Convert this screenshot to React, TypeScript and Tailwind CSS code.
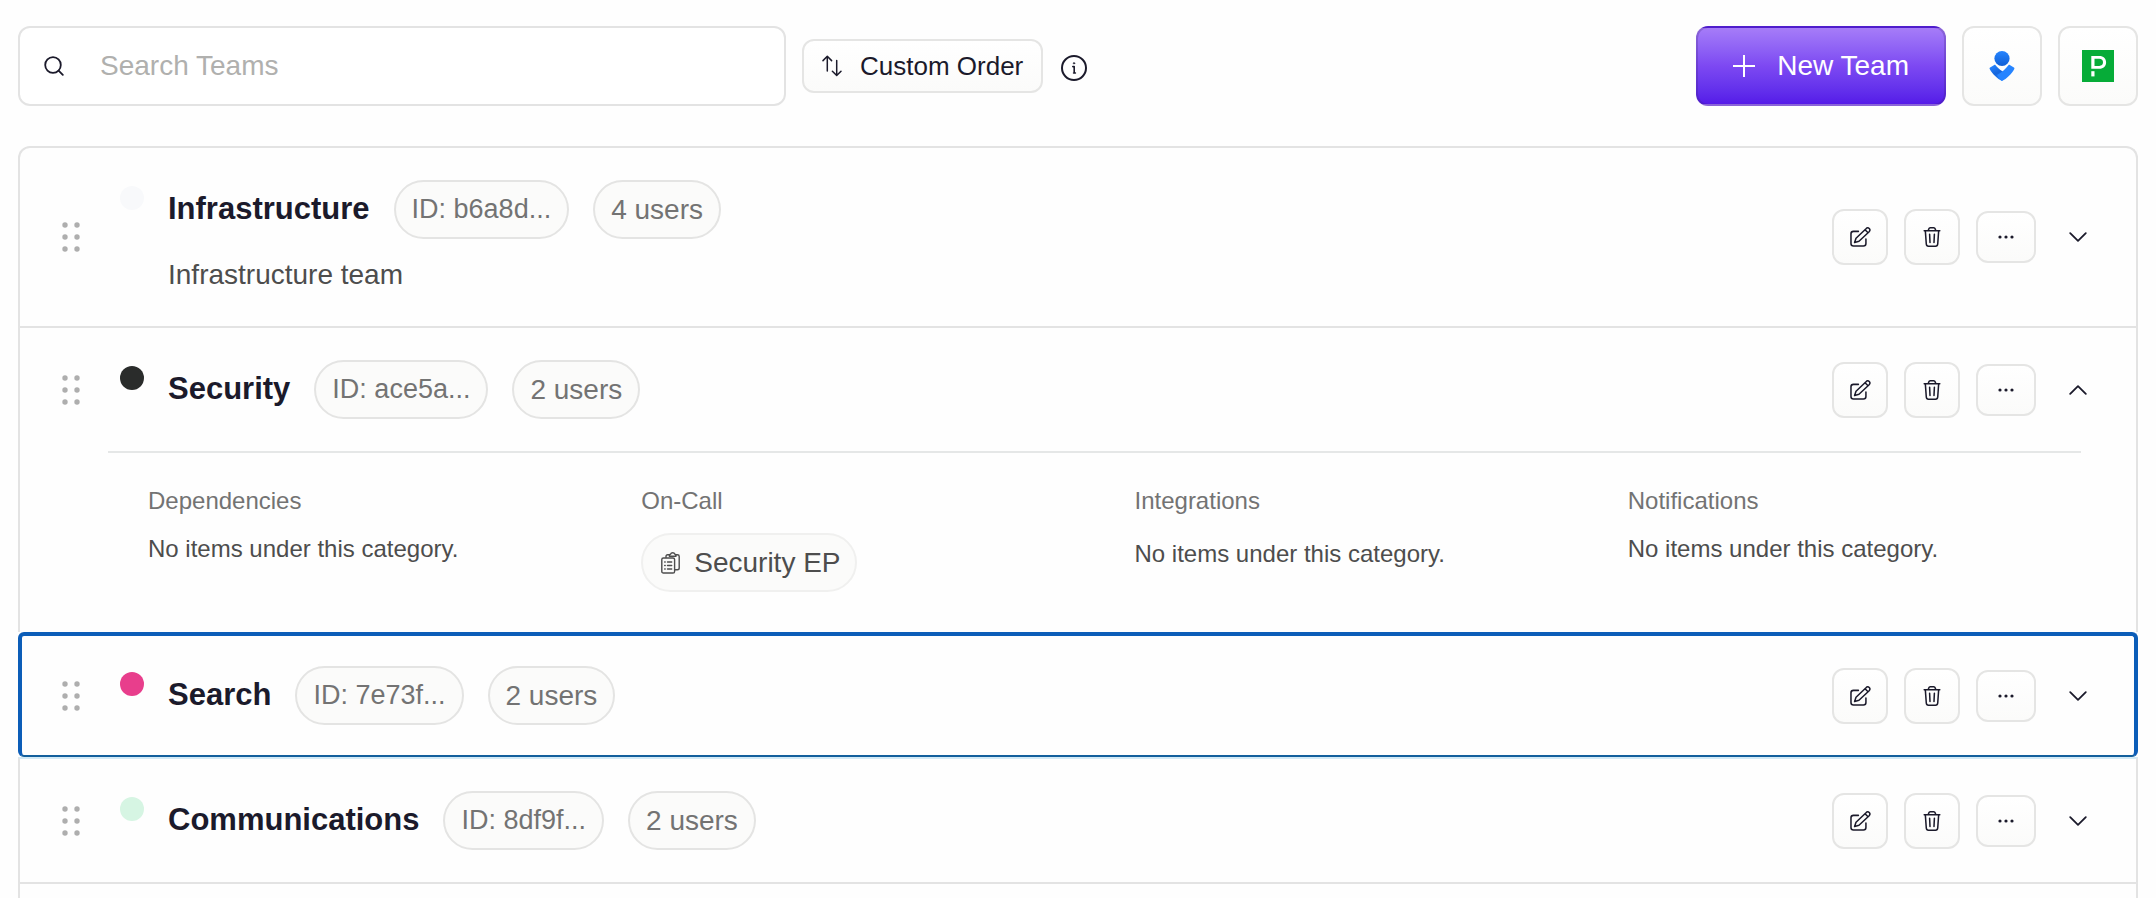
import { useState } from "react";
import type { ReactNode } from "react";

type Team = {
  name: string;
  id: string;
  users: number;
  dot: string;
  description?: string;
  open?: boolean;
  row: string;
  header: string;
};

const plainRow = "border-x-2 border-t-2 border-[#e3e3e3]";
const plainHeader = "py-8 pl-[42px] pr-8";

const teams: Team[] = [
  {
    name: "Infrastructure",
    id: "b6a8d...",
    users: 4,
    dot: "bg-[#f8f9fb]",
    description: "Infrastructure team",
    row: `${plainRow} rounded-t-xl`,
    header: plainHeader,
  },
  {
    name: "Security",
    id: "ace5a...",
    users: 2,
    dot: "bg-[#2a2c2b]",
    open: true,
    row: plainRow,
    header: plainHeader,
  },
  {
    name: "Search",
    id: "7e73f...",
    users: 2,
    dot: "bg-[#e83e8c]",
    row: "rounded-md border-x-4 border-t-4 border-b-2 border-[#0c5db8] border-b-[#135f9c]",
    header: "py-[30px] pl-10 pr-[30px]",
  },
  {
    name: "Communications",
    id: "8df9f...",
    users: 2,
    dot: "bg-[#d6f5e3]",
    row: "border-x-2 border-t-2 border-[#e3e3e3] border-t-[#d3eaf6]",
    header: plainHeader,
  },
];

function SearchIcon() {
  return (
    <svg width="20" height="20" viewBox="0 0 20 20" fill="none" stroke="#1b1a2b" strokeWidth="1.8" strokeLinecap="round" aria-hidden="true">
      <circle cx="9" cy="9" r="7.8" />
      <path d="M14.6 14.6 18.8 18.9" />
    </svg>
  );
}

function SortIcon() {
  return (
    <svg width="20" height="22" viewBox="0 0 20 22" fill="none" stroke="#1b1a2b" strokeWidth="1.5" strokeLinecap="round" strokeLinejoin="round" aria-hidden="true">
      <path d="M5.3 16V1.5M1 5.6 5.3 1.3 9.6 5.6" />
      <path d="M14.7 5.5V20.3M10.4 16.2 14.7 20.5 19 16.2" />
    </svg>
  );
}

function InfoIcon() {
  return (
    <svg width="26" height="26" viewBox="0 0 26 26" fill="none" stroke="#1b1a2b" strokeLinecap="round" strokeLinejoin="round" aria-hidden="true">
      <circle cx="13" cy="13" r="12" strokeWidth="2" />
      <path d="M11.8 11.6H13.2V17.6M12.6 18H14.4" strokeWidth="1.6" />
      <circle cx="13" cy="8.3" r="0.8" fill="#1b1a2b" strokeWidth="0.5" />
    </svg>
  );
}

function PlusIcon() {
  return (
    <svg width="22" height="22" viewBox="0 0 22 22" fill="none" stroke="#fff" strokeWidth="2" aria-hidden="true">
      <path d="M11 0V22M0 11H22" />
    </svg>
  );
}

function OpsgenieLogo() {
  return (
    <svg width="26" height="32" viewBox="0 0 26 32" aria-hidden="true">
      <defs>
        <linearGradient id="og-head" x1="0" y1="0" x2="0" y2="1">
          <stop offset="0" stopColor="#2684ff" />
          <stop offset="1" stopColor="#0f5fd6" />
        </linearGradient>
        <linearGradient id="og-arm" x1="0.2" y1="0" x2="0.7" y2="1">
          <stop offset="0" stopColor="#2684ff" />
          <stop offset="0.5" stopColor="#1565dc" />
          <stop offset="1" stopColor="#2684ff" />
        </linearGradient>
      </defs>
      <path d="M13 31C8.300 28.600 3.500 24 0.700 18.900C0.400 18.300 0.600 17.700 1.100 17.400L5.200 15C5.700 14.700 6.300 14.900 6.600 15.300C8.200 17.500 10.400 19.500 13 20.900L17 24Z" fill="url(#og-arm)" />
      <path d="M13 31C17.700 28.600 22.500 24 25.300 18.900C25.600 18.300 25.400 17.700 24.900 17.400L20.800 15C20.300 14.700 19.700 14.900 19.400 15.300C17.400 18.200 13 22.300 8 25C9.500 27.500 11.200 29.500 13 31Z" fill="#2684ff" />
      <circle cx="13" cy="8.500" r="7.600" fill="url(#og-head)" />
    </svg>
  );
}

function PagerDutyLogo() {
  return (
    <svg width="32" height="32" viewBox="0 0 32 32" aria-hidden="true">
      <rect width="32" height="32" fill="#06ac38" />
      <rect x="9.300" y="21.200" width="3.200" height="5.200" fill="#fff" />
      <path fillRule="evenodd" fill="#fff" d="M9.300 5.900H17.300C21.500 5.900 24.100 8.400 24.100 12.200C24.100 16.200 21.500 18.700 17.300 18.700H9.300ZM12.500 8.700V15.900H17.200C19.700 15.900 21 14.500 21 12.300C21 10.100 19.700 8.700 17.200 8.700Z" />
    </svg>
  );
}

function GripIcon() {
  return (
    <svg width="18" height="30" viewBox="0 0 18 30" fill="#aeaeae" aria-hidden="true">
      <circle cx="3" cy="3" r="2.7" />
      <circle cx="15" cy="3" r="2.7" />
      <circle cx="3" cy="15" r="2.7" />
      <circle cx="15" cy="15" r="2.7" />
      <circle cx="3" cy="27" r="2.7" />
      <circle cx="15" cy="27" r="2.7" />
    </svg>
  );
}

function EditIcon() {
  return (
    <svg width="21" height="20" viewBox="0 0 22 21" fill="none" stroke="#1b1a2b" strokeWidth="1.6" strokeLinecap="round" strokeLinejoin="round" aria-hidden="true">
      <path d="M8.800 4.600H3.600C2 4.600 1 5.600 1 7.200V17.400C1 19 2 20 3.600 20H14.100C15.700 20 16.700 19 16.700 17.400V12.600" />
      <path d="M4.800 16.200 6.300 11.800 16.800 1.800C17.700 0.800 19.200 0.700 20.200 1.600C21.100 2.600 21 4 20.100 5L9.400 14.900ZM15.800 2.900 18.900 6.100" />
    </svg>
  );
}

function TrashIcon() {
  return (
    <svg width="18" height="20" viewBox="0 0 18 21" fill="none" stroke="#1b1a2b" strokeWidth="1.6" strokeLinecap="round" strokeLinejoin="round" aria-hidden="true">
      <path d="M0.800 4H17.200M5 4 5.600 2.200C5.900 1.300 6.400 0.900 7.200 0.900H10.800C11.600 0.900 12.100 1.300 12.400 2.200L13 4" />
      <path d="M2 4 3 17.800C3.100 19.300 4 20.100 5.300 20.100H12.700C14 20.100 14.900 19.300 15 17.800L16 4" />
      <path d="M6.500 7.600 6.900 16.200M11.500 7.600 11.100 16.200" />
    </svg>
  );
}

function DotsIcon() {
  return (
    <svg width="16" height="4" viewBox="0 0 16 4" fill="#1b1a2b" aria-hidden="true">
      <circle cx="2" cy="2" r="1.6" />
      <circle cx="8" cy="2" r="1.6" />
      <circle cx="14" cy="2" r="1.6" />
    </svg>
  );
}

function Chevron({ up }: { up: boolean }) {
  return (
    <svg width="18" height="10" viewBox="0 0 18 10" fill="none" stroke="#1b1a2b" strokeWidth="1.8" strokeLinecap="round" strokeLinejoin="round" aria-hidden="true">
      <path d={up ? "M1.200 8.900 9 1.100 16.800 8.900" : "M1.200 1.100 9 8.900 16.800 1.100"} />
    </svg>
  );
}

function PolicyIcon() {
  return (
    <svg width="19" height="22" viewBox="0 0 19 22" fill="none" stroke="#4d4d4d" strokeWidth="1.4" strokeLinecap="round" strokeLinejoin="round" aria-hidden="true">
      <path d="M5 5.500V4.400C5 3.400 5.600 2.800 6.600 2.800H8.400M15 2.800H16.400C17.500 2.800 18.200 3.500 18.200 4.500V16C18.200 17.100 17.500 17.800 16.400 17.800H13.600" />
      <path d="M8.400 4.200V3.400C8.400 2.700 8.800 2.300 9.500 2.300C9.900 1.200 10.700 0.800 11.700 0.800C12.700 0.800 13.500 1.200 13.900 2.300C14.600 2.300 15 2.700 15 3.400V4.200Z" />
      <rect x="0.800" y="6" width="12.800" height="15" rx="1.600" />
      <path d="M3.700 10H4.200M6.500 10H10.700M3.700 13.500H4.200M6.500 13.500H10.700M3.700 17H4.200M6.500 17H10.700" />
    </svg>
  );
}

const surface = "flex shrink-0 items-center justify-center rounded-xl border-2 border-[#e5e5e4] bg-linear-to-b from-white to-[#fbfbfa]";

function Pill({ size, children }: { size: string; children: ReactNode }) {
  return (
    <span className={`flex h-[59px] items-center whitespace-nowrap rounded-full border-2 border-[#e4e4e3] bg-[#fbfbfa] px-4 text-[#737373] ${size}`}>
      {children}
    </span>
  );
}

function Empty({ className }: { className: string }) {
  return <p className={`text-2xl text-[#4d4d4d] ${className}`}>No items under this category.</p>;
}

function Details() {
  return (
    <div className="ml-[88px] mr-[55px] grid grid-cols-4 border-t-2 border-[#e5e7e7] pt-8 pb-10">
      <section className="flex flex-col items-start gap-4 pl-10">
        <h3 className="text-2xl leading-8 text-[#737373]">Dependencies</h3>
        <Empty className="leading-8" />
      </section>
      <section className="flex flex-col items-start gap-4 pl-10">
        <h3 className="text-2xl leading-8 text-[#737373]">On-Call</h3>
        <a href="#security-ep" className="flex h-[59px] items-center gap-[14px] whitespace-nowrap rounded-full border-2 border-[#f0f0ef] bg-[#fbfbfa] pr-[14px] pl-[18px] text-[28px] text-[#4d4d4d]">
          <PolicyIcon />
          Security EP
        </a>
      </section>
      <section className="flex flex-col items-start gap-4 pl-10">
        <h3 className="text-2xl leading-8 text-[#737373]">Integrations</h3>
        <Empty className="leading-[42px]" />
      </section>
      <section className="flex flex-col items-start gap-4 pl-10">
        <h3 className="text-2xl leading-8 text-[#737373]">Notifications</h3>
        <Empty className="leading-8" />
      </section>
    </div>
  );
}

function TeamRow({ team }: { team: Team }) {
  const [open, setOpen] = useState(Boolean(team.open));
  return (
    <li className={team.row}>
      <div className={`flex items-center ${team.header}`}>
        <button type="button" aria-label={`Move ${team.name}`} className="mr-10 cursor-grab">
          <GripIcon />
        </button>
        <span className={`mt-[6px] mr-6 size-6 shrink-0 self-start rounded-full ${team.dot}`} />
        <div className="min-w-0 flex-1">
          <div className="flex items-center gap-6">
            <h2 className="text-[31px] font-bold text-[#1b1a2b]">{team.name}</h2>
            <Pill size="text-[27px]">ID: {team.id}</Pill>
            <Pill size="text-[28px]">{team.users} users</Pill>
          </div>
          {team.description && <p className="mt-4 text-[28px] leading-[39px] text-[#4d4d4d]">{team.description}</p>}
        </div>
        <div className="flex items-center gap-4">
          <button type="button" aria-label={`Edit ${team.name}`} className={`${surface} size-14`}>
            <EditIcon />
          </button>
          <button type="button" aria-label={`Delete ${team.name}`} className={`${surface} size-14`}>
            <TrashIcon />
          </button>
          <button type="button" aria-label={`More actions for ${team.name}`} className={`${surface} h-13 w-15`}>
            <DotsIcon />
          </button>
          <button
            type="button"
            aria-label={`Toggle ${team.name}`}
            aria-expanded={open}
            onClick={() => setOpen(!open)}
            className="flex size-13 items-center justify-center"
          >
            <Chevron up={open} />
          </button>
        </div>
      </div>
      {open && <Details />}
    </li>
  );
}

export default function App() {
  return (
    <main className="flex min-h-screen flex-col bg-[#fefefe] px-[18px] pt-[26px] font-['Liberation_Sans',Arial,sans-serif]">
      <header className="flex items-center gap-4">
        <label className="flex h-20 w-[768px] items-center gap-9 rounded-xl border-2 border-[#e3e3e3] bg-white px-6">
          <SearchIcon />
          <input
            type="text"
            aria-label="Search Teams"
            placeholder="Search Teams"
            className="min-w-0 flex-1 bg-transparent text-[28px] text-[#1b1a2b] outline-none placeholder:text-[#b0b0ae]"
          />
        </label>
        <button type="button" className={`${surface} h-[54px] gap-[18px] whitespace-nowrap px-[18px] text-[26px] text-[#1b1a2b]`}>
          <SortIcon />
          Custom Order
        </button>
        <button type="button" aria-label="About ordering" className="ml-[2px] pt-1">
          <InfoIcon />
        </button>
        <div className="ml-auto flex gap-4">
          <button
            type="button"
            className="flex h-20 items-center gap-[22px] whitespace-nowrap rounded-xl border-2 border-[#3c1e78]/25 bg-linear-to-b from-[#a67cf8] via-[#7d48f2] to-[#551ae8] px-[35px] text-[28px] text-white"
          >
            <PlusIcon />
            New Team
          </button>
          <button type="button" aria-label="Opsgenie" className={`${surface} size-20`}>
            <OpsgenieLogo />
          </button>
          <button type="button" aria-label="PagerDuty" className={`${surface} size-20`}>
            <PagerDutyLogo />
          </button>
        </div>
      </header>

      <ul className="mt-10 flex flex-1 flex-col">
        {teams.map((team) => (
          <TeamRow key={team.id} team={team} />
        ))}
        <li className="flex-1 border-x-2 border-t-2 border-[#e3e3e3]" />
      </ul>
    </main>
  );
}
